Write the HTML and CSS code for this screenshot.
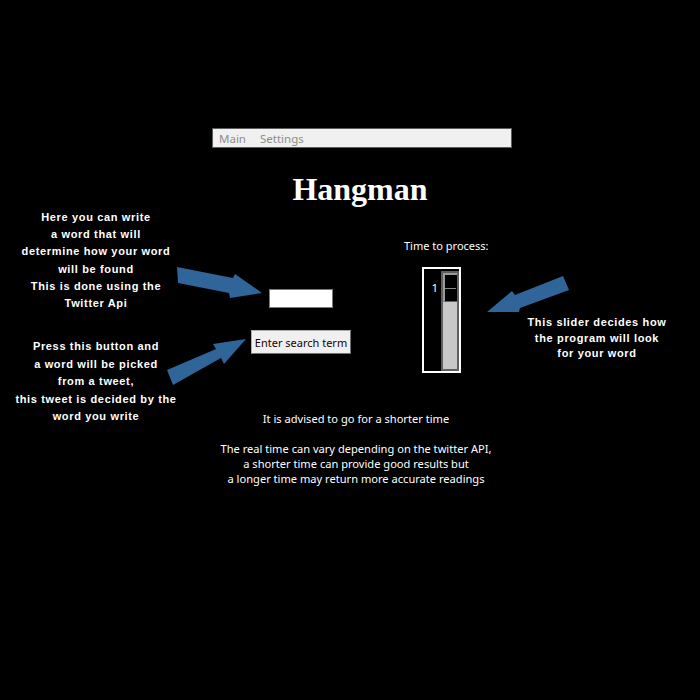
FILE: index.html
```html
<!DOCTYPE html>
<html>
<head>
<meta charset="utf-8">
<link rel="stylesheet" href="styles.css">
</head>
<body>
<div class="page">
  <nav class="menubar"><span class="menu-item">Main</span><span class="menu-item">Settings</span></nav>
  <h1 class="title">Hangman</h1>
  <div class="main">
    <div class="notes-left">
      <p class="note note-1">Here you can write<br>a word that will<br>determine how your word<br>will be found<br>This is done using the<br>Twitter Api</p>
      <p class="note note-2">Press this button and<br>a word will be picked<br>from a tweet,<br>this tweet is decided by the<br>word you write</p>
    </div>
    <div class="center">
      <div class="controls">
        <div class="col-search">
          <input class="search-input" type="text">
          <button class="search-button">Enter search term</button>
        </div>
        <div class="col-time">
          <div class="time-label">Time to process:</div>
          <div class="slider">
            <span class="slider-value">1</span>
            <div class="slider-track"><div class="slider-thumb"></div></div>
          </div>
        </div>
      </div>
      <div class="advice">
        <p>It is advised to go for a shorter time</p>
        <p>The real time can vary depending on the twitter API,<br>a shorter time can provide good results but<br>a longer time may return more accurate readings</p>
      </div>
    </div>
    <div class="notes-right">
      <p class="note note-3">This slider decides how<br>the program will look<br>for your word</p>
    </div>
  </div>
  <svg class="arrows" width="700" height="700" viewBox="0 0 700 700">
    <polygon points="177,267 233,278 235,274 262,293 230,298 229,293 178,283" />
    <polygon points="167,370 216,349 213,344 246,339 224,364 221,358 173,385" />
    <polygon points="563,276 515,295 512,291 487,312 519,312 520,308 569,290" />
  </svg>
</div>
</body>
</html>
```

FILE: styles.css
```css
html, body {
  margin: 0;
  padding: 0;
  background: #000;
}

.page {
  position: relative;
  width: 700px;
  height: 700px;
  padding-top: 128px;
  box-sizing: border-box;
  overflow: hidden;
}

.menubar {
  margin-left: 212px;
  width: 300px;
  height: 20px;
  box-sizing: border-box;
  border: 1px solid #5c5c5c;
  background: #f0f0f0;
  display: flex;
  gap: 14px;
  padding-left: 6px;
  align-items: center;
  font-family: "Noto Sans", sans-serif;
  font-size: 11.5px;
  color: #8d8d8d;
}

.title {
  margin: 23px 0 0 212px;
  width: 296px;
  text-align: center;
  font-family: "Liberation Serif", serif;
  font-weight: bold;
  font-size: 32px;
  line-height: 36px;
  color: #fff;
}

.main {
  display: flex;
  align-items: flex-start;
}

.notes-left {
  width: 192px;
  display: flex;
  flex-direction: column;
}

.note {
  margin: 0;
  text-align: center;
  font-family: "Liberation Sans", sans-serif;
  font-weight: bold;
  font-size: 11px;
  letter-spacing: 0.65px;
  color: #fff;
}

.note-1 {
  margin-top: 2px;
  line-height: 17.2px;
}

.note-2 {
  margin-top: 26px;
  line-height: 17.5px;
}

.note-3 {
  line-height: 15.5px;
}

.center {
  margin-left: 14px;
  width: 300px;
}

.controls {
  display: flex;
}

.col-search {
  width: 190px;
  display: flex;
  flex-direction: column;
  align-items: center;
  padding-top: 82px;
}

.search-input {
  width: 64px;
  height: 19px;
  box-sizing: border-box;
  border: 1px solid #7a7a7a;
  background: #fff;
  margin: 0;
  padding: 0;
  outline: none;
}

.search-button {
  margin-top: 22px;
  width: 100px;
  height: 24px;
  box-sizing: border-box;
  border: 1px solid #adadad;
  border-right-color: #707070;
  border-bottom-color: #707070;
  background: #f0f0f0;
  padding: 0;
  font-family: "Noto Sans", sans-serif;
  font-size: 11px;
  color: #1a0000;
}

.col-time {
  display: flex;
  flex-direction: column;
  padding-top: 31px;
}

.time-label {
  margin-left: 8px;
  font-family: "Noto Sans", sans-serif;
  font-size: 11px;
  line-height: 15px;
  color: #fff;
}

.slider {
  margin: 14px 0 0 26px;
  width: 39px;
  height: 106px;
  box-sizing: border-box;
  border: 2px solid #fff;
  display: flex;
  justify-content: flex-end;
  padding-top: 2px;
}

.slider-value {
  margin: 9px 3px 0 0;
  font-family: "Noto Sans", sans-serif;
  font-size: 11.5px;
  line-height: 15px;
  height: 15px;
  color: #fff;
}

.slider-track {
  width: 18px;
  height: 100px;
  box-sizing: border-box;
  border: 2px solid #5f5f5f;
  background: #c8c8c8;
}

.slider-thumb {
  position: relative;
  height: 29px;
  box-sizing: border-box;
  background: #000;
  border-top: 2px solid #9a9a9a;
  border-left: 2px solid #9a9a9a;
  border-bottom: 1px solid #5f5f5f;
}

.slider-thumb::after {
  content: "";
  position: absolute;
  left: 0;
  right: 1px;
  top: 13px;
  height: 1px;
  background: #8a8a8a;
}

.advice {
  margin-top: 38px;
  text-align: center;
  font-family: "Noto Sans", sans-serif;
  font-size: 11.1px;
  line-height: 15px;
  color: #fff;
}

.advice p {
  margin: 0 0 15px 0;
}

.notes-right {
  width: 182px;
  padding-top: 108px;
}

.arrows {
  position: absolute;
  left: 0;
  top: 0;
  pointer-events: none;
}

.arrows polygon {
  fill: #2f6598;
}
```
